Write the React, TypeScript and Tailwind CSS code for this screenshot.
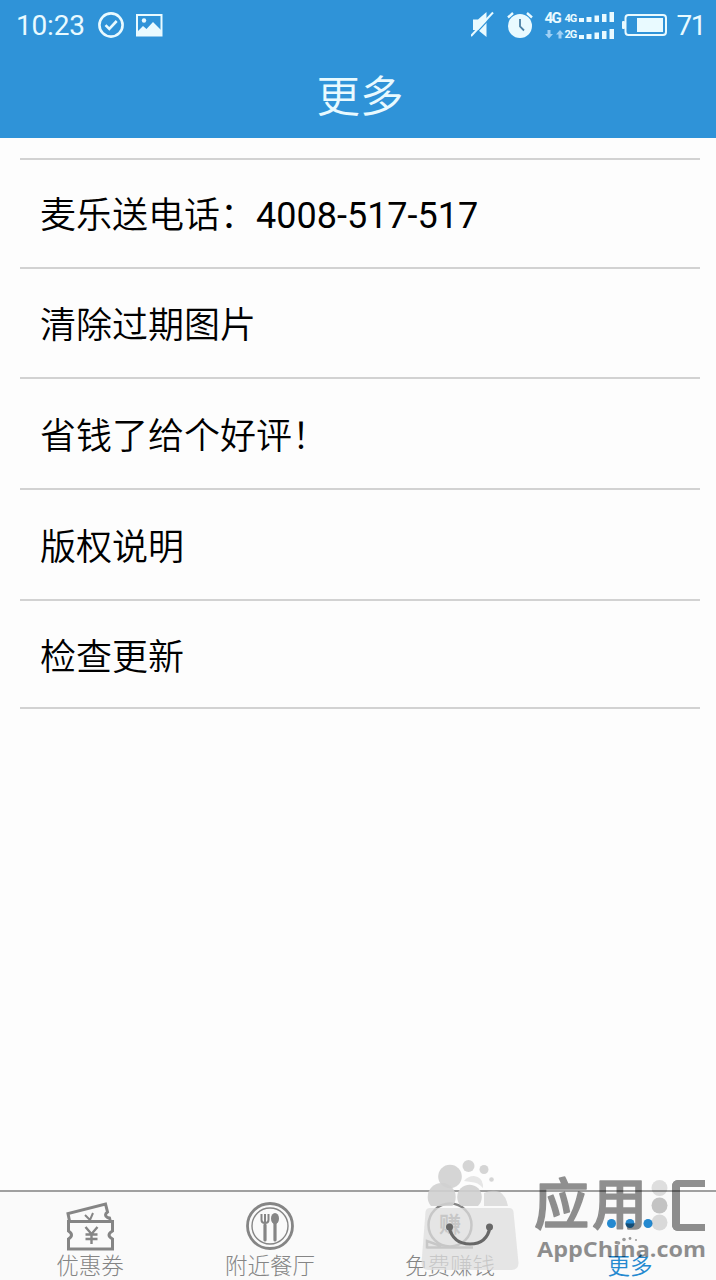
import type { ReactNode } from "react"
import { clsx } from "clsx"

interface MenuItem {
  label: string
  phone?: string
  height: string
}

interface TabItem {
  label: string
  icon: ReactNode
  active?: boolean
}

const menuItems: MenuItem[] = [
  { label: "麦乐送电话：", phone: "4008-517-517", height: "h-[109px] pt-[4px]" },
  { label: "清除过期图片", height: "h-[110px] pt-[6px]" },
  { label: "省钱了给个好评！", height: "h-[111px] pt-[6px]" },
  { label: "版权说明", height: "h-[111px] pt-[6px]" },
  { label: "检查更新", height: "h-[108px] pt-[8px]" },
]

function CheckCircleIcon() {
  return (
    <svg width="28" height="28" viewBox="0 0 28 28" fill="none" stroke="currentColor" strokeWidth="2.6">
      <circle cx="14" cy="14" r="11.6" />
      <path d="M8.500 14.200l3.800 3.800 7.400-8" />
    </svg>
  )
}

function PictureIcon() {
  return (
    <svg width="28" height="24" viewBox="0 0 28 24" fill="none">
      <rect x="2" y="2" width="24.500" height="20.500" stroke="currentColor" strokeWidth="2" />
      <circle cx="9" cy="7.500" r="2.200" fill="currentColor" />
      <path d="M2 21v-2l6-6 3.500 3 6.500-7L26 17v5H2z" fill="currentColor" />
    </svg>
  )
}

function MuteIcon() {
  return (
    <svg width="24" height="28" viewBox="0 0 24 28" fill="none">
      <path d="M2 8.500h5l8.500-7.500v25l-8.500-7H2z" fill="currentColor" />
      <path d="M1.500 26L23.500 2.500" stroke="#2f93d8" strokeWidth="1.200" />
      <path d="M0 25L22 1.500" stroke="currentColor" strokeWidth="2" />
    </svg>
  )
}

function AlarmIcon() {
  return (
    <svg width="26" height="28" viewBox="0 0 26 28" fill="none">
      <circle cx="13" cy="15" r="12" fill="currentColor" />
      <path d="M1 6.500L6 2M25 6.500L20 2" stroke="currentColor" strokeWidth="2.400" />
      <path d="M13 8v7.500l4 4" stroke="#4a7fa5" strokeWidth="1.800" />
    </svg>
  )
}

function SignalBars() {
  return (
    <svg width="36" height="12" viewBox="0 0 36 12" fill="currentColor">
      <rect x="0" y="7" width="5" height="4" />
      <rect x="7.500" y="6" width="5" height="5" />
      <rect x="15.500" y="4.500" width="4.500" height="6.500" />
      <rect x="23" y="3" width="4.500" height="8" />
      <rect x="30.500" y="1" width="4.500" height="10" />
    </svg>
  )
}

function BatteryIcon() {
  return (
    <svg width="46" height="24" viewBox="0 0 46 24" fill="none">
      <rect x="3.500" y="2" width="40.500" height="20" rx="3" stroke="currentColor" strokeWidth="2" />
      <rect x="0" y="8" width="3" height="8" rx="1" fill="currentColor" />
      <rect x="15" y="5" width="26" height="14" fill="currentColor" />
    </svg>
  )
}

function StatusBar() {
  return (
    <div className="flex h-[50px] items-center justify-between pr-[11px] pl-4">
      <div className="flex items-center">
        <span className="w-[70px] pt-px text-[28px] tracking-[-0.2px]">10:23</span>
        <span className="ml-[11px]">
          <CheckCircleIcon />
        </span>
        <span className="ml-[10px]">
          <PictureIcon />
        </span>
      </div>
      <div className="flex items-center">
        <MuteIcon />
        <span className="ml-3">
          <AlarmIcon />
        </span>
        <div className="ml-3 flex h-8 w-[70px] flex-col justify-between">
          <div className="flex h-[15px] items-center">
            <span className="w-[20px] pt-1 text-[15px] leading-none font-bold tracking-[-1.500px]">4G</span>
            <span className="w-[14px] pt-1 text-[11px] leading-none font-bold tracking-[-1px]">4G</span>
            <SignalBars />
          </div>
          <div className="flex h-[15px] items-center">
            <svg width="20" height="10" viewBox="0 0 20 10" fill="#9fd0f5">
              <path d="M2.500 1h3v4h2.500l-4 4.500-4-4.500h2.500z" />
              <path d="M13.500 9.500h3v-4H19l-4-4.500-4 4.500h2.500z" />
            </svg>
            <span className="w-[14px] pt-0.5 text-[11px] leading-none font-bold tracking-[-1px]">2G</span>
            <SignalBars />
          </div>
        </div>
        <span className="ml-[7px]">
          <BatteryIcon />
        </span>
        <span className="ml-[9px] pt-px text-[28px] tracking-[-1.500px]">71</span>
      </div>
    </div>
  )
}

function CouponIcon() {
  return (
    <svg width="50" height="50" viewBox="0 0 50 50" fill="none" stroke="currentColor" strokeWidth="3">
      <path d="M4.500 20L3 12.500 40.500 3l2 8q-4 3 0 5.500l2 .5 1 4" />
      <path d="M3.500 20.500h44v9.500q-7 4 0 8v10H3.500V38q6-4 0-8z" />
      <path d="M20 14l5 5 3-7" strokeWidth="2" />
      <path d="M20.500 26l6 7 6-7M26.500 33v10M20.500 33.500h12M20.500 38h12" strokeWidth="2.400" />
    </svg>
  )
}

function RestaurantIcon() {
  return (
    <svg width="50" height="50" viewBox="0 0 50 50" fill="none" stroke="currentColor">
      <circle cx="25" cy="25" r="22.500" strokeWidth="2.800" />
      <circle cx="25" cy="25" r="18" strokeWidth="1.400" />
      <path d="M16.500 13v6q0 3 3.500 3t3.500-3v-6M20 13v13" strokeWidth="2" />
      <path d="M20 24v15M30 22v17" strokeWidth="3.200" strokeLinecap="round" />
      <ellipse cx="30" cy="17.500" rx="4" ry="5.500" fill="currentColor" stroke="none" />
    </svg>
  )
}

function EarnIcon() {
  return (
    <svg width="50" height="50" viewBox="0 0 50 50" fill="none" stroke="currentColor">
      <circle cx="25" cy="24" r="21.500" strokeWidth="2.500" />
      <text x="14" y="31" fontSize="22" fill="currentColor" stroke="none" className="font-bold">
        赚
      </text>
      <path d="M2 46.500h46M2 47.500V40l14 5" strokeWidth="2.500" />
    </svg>
  )
}

function MoreIcon() {
  return (
    <svg width="50" height="50" viewBox="0 0 50 50" fill="currentColor">
      <circle cx="6.500" cy="22.500" r="4.500" />
      <circle cx="25" cy="22.500" r="4.500" />
      <circle cx="43" cy="22.500" r="4.500" />
    </svg>
  )
}

const tabs: TabItem[] = [
  { label: "优惠券", icon: <CouponIcon /> },
  { label: "附近餐厅", icon: <RestaurantIcon /> },
  { label: "免费赚钱", icon: <EarnIcon /> },
  { label: "更多", icon: <MoreIcon />, active: true },
]

function TabBar() {
  return (
    <nav className="h-[90px] overflow-hidden border-t-2 border-[#a0a0a0] bg-[#fafafa]">
      <div className="flex w-[720px]">
        {tabs.map((tab) => (
          <button
            key={tab.label}
            type="button"
            className={clsx(
              "flex w-[180px] flex-col items-center pt-[9px]",
              tab.active ? "text-[#2489d0]" : "text-[#858585]"
            )}
          >
            {tab.icon}
            <span
              className={clsx("text-[22.5px] leading-[30px]", tab.active ? "font-[350]" : "font-light")}
            >
              {tab.label}
            </span>
          </button>
        ))}
      </div>
    </nav>
  )
}

/** App store mark laid over the bottom right corner. */
function StoreMark() {
  return (
    <div className="pointer-events-none absolute right-0 bottom-0 h-[130px] w-[300px]">
      <svg width="300" height="130" viewBox="416 1150 300 130" fill="none">
        <clipPath id="bubbles">
          <rect x="416" y="1150" width="110" height="56" />
        </clipPath>
        <g clipPath="url(#bubbles)" fill="#d0d0d0" fillOpacity="0.9">
          <circle cx="450" cy="1176.500" r="11.800" />
          <circle cx="468.500" cy="1166" r="6" />
          <circle cx="484" cy="1169.500" r="4.500" />
          <circle cx="491.500" cy="1179.500" r="2.300" />
          <path d="M464 1181q4-5 10-5 8 1 9 9v3q-5-6-12-6z" fillOpacity="0.5" />
          <circle cx="441.700" cy="1197" r="14" />
          <circle cx="469.500" cy="1197" r="12.300" />
          <path d="M484 1206v-13q8-4 16-1 6 4 8 14z" fillOpacity="0.65" />
        </g>
        <path
          d="M430 1208h79q4 0 4.500 4l5 51q0 7-7 7h-83q-7 0-7-7l4-51q.5-4 4.500-4z"
          fill="#dedede"
          fillOpacity="0.75"
        />
        <g fill="#686868" stroke="#686868">
          <circle cx="449.500" cy="1227" r="3.500" stroke="none" />
          <circle cx="489.500" cy="1227" r="3.500" stroke="none" />
          <path d="M449 1227q4 17 21 17t20-17" fill="none" strokeWidth="3.200" />
        </g>
        <g opacity="0.43" fill="#000">
          <g fontSize="55" stroke="#000" strokeWidth="1.5" strokeLinejoin="round" className="font-medium">
            <text x="534" y="1224">
              应
            </text>
            <text x="592" y="1224">
              用
            </text>
          </g>
          <text
            x="537"
            y="1257"
            fontSize="21"
            textLength="169"
            lengthAdjust="spacingAndGlyphs"
            fontFamily="Open Sans, sans-serif"
            className="font-bold"
          >
            AppChina.com
          </text>
        </g>
        <g fill="#000">
          <circle cx="659.500" cy="1188" r="8" fillOpacity="0.12" />
          <circle cx="659.500" cy="1205.500" r="8" fillOpacity="0.22" />
          <circle cx="659.500" cy="1222.500" r="8" fillOpacity="0.13" />
        </g>
        <g fill="#999">
          <circle cx="618.500" cy="1243" r="1.800" />
          <circle cx="624" cy="1239.500" r="1.800" />
          <circle cx="630" cy="1238.500" r="1.400" />
          <circle cx="636" cy="1240" r="1" />
        </g>
      </svg>
      {/* Open bracket that closes the wordmark */}
      <div className="absolute top-[30px] right-[11px] h-[51px] w-[33px] rounded-l-md border-y-[7px] border-l-[8px] border-black opacity-[0.43]" />
    </div>
  )
}

export default function App() {
  return (
    <div className="relative flex h-[1280px] w-[716px] flex-col overflow-hidden bg-[#fdfdfd] font-['Roboto','Noto_Sans_CJK_SC',sans-serif]">
      <header className="h-[138px] bg-[#2f93d8] text-[#e9faff]">
        <StatusBar />
        <h1 className="w-[720px] pt-[18px] text-center text-[43.5px] leading-[60px] font-[350]">更多</h1>
      </header>

      <main className="flex-1 px-5 pt-5">
        <ul className="w-[680px] border-t-2 border-[#d2d2d2]">
          {menuItems.map((item) => (
            <li
              key={item.label}
              className={clsx(
                "flex items-center border-b-2 border-[#d2d2d2] pl-5 text-[36px] leading-none font-[350] text-black",
                item.height
              )}
            >
              {item.label}
              {item.phone && <span className="font-normal">{item.phone}</span>}
            </li>
          ))}
        </ul>
      </main>

      <TabBar />
      <StoreMark />
    </div>
  )
}
